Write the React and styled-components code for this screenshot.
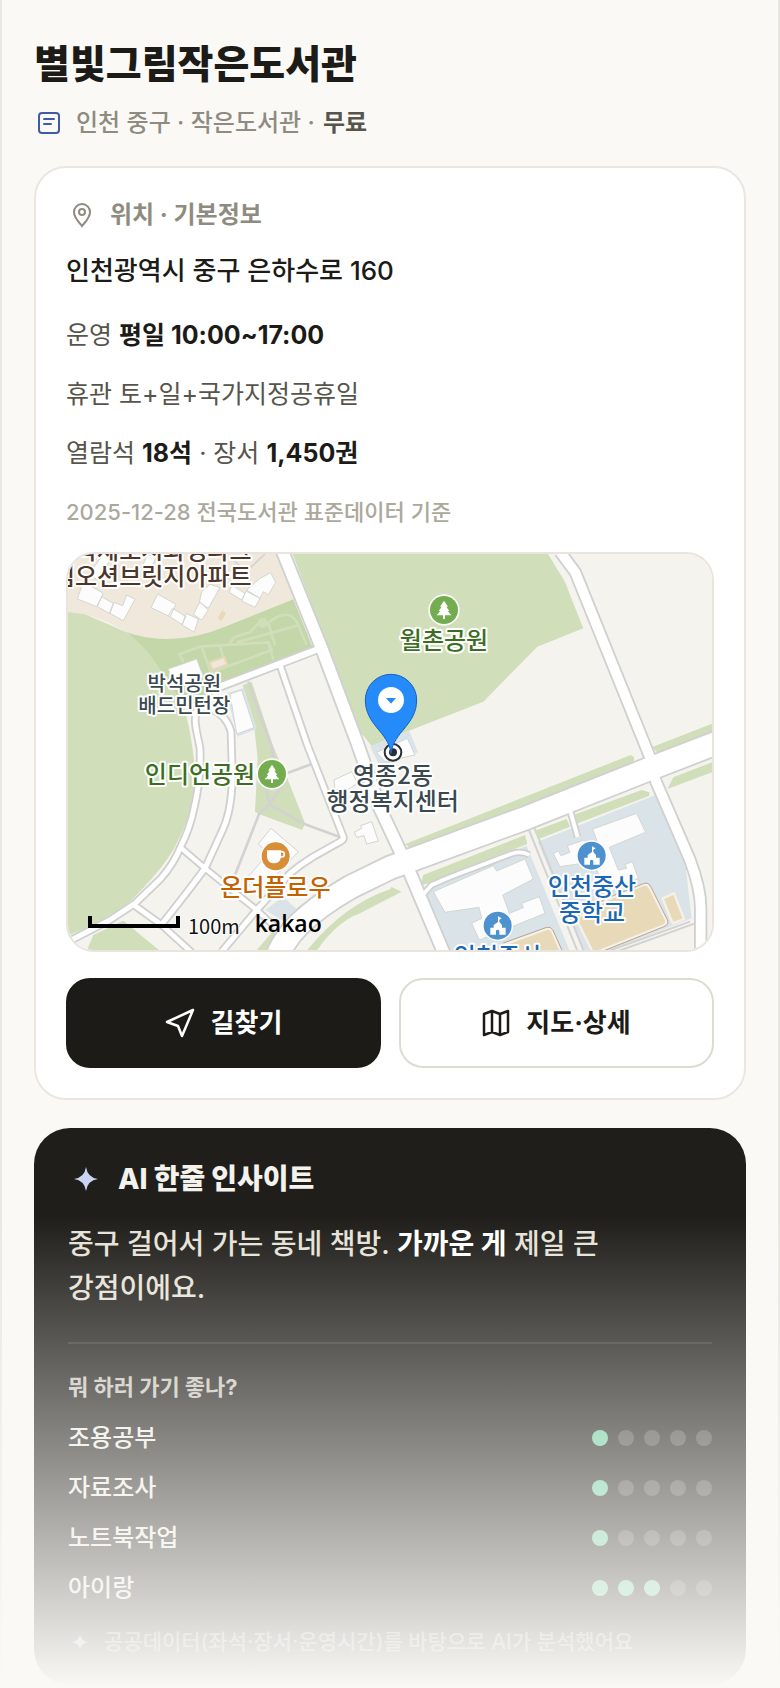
import React from 'react'
import styled, { createGlobalStyle } from 'styled-components'

const GlobalStyle = createGlobalStyle`
    *{
        box-sizing: border-box;
    }

    body{
        margin: 0;
        background: #faf9f6;
        color: #1c1b17;
        font-family: Inter, 'Noto Sans CJK KR', sans-serif;
        font-weight: 500;
        word-break: keep-all;
    }

    h1, h2, h3, p, ul{
        margin: 0;
        padding: 0;
        font-weight: inherit;
        list-style: none;
    }
`

const Page = styled.main`
    position: relative;
    min-height: 100vh;
    padding: 40px 32px 2px;
    border: solid #e9e8e1;
    border-width: 0 2px;
`

const Title = styled.h1`
    font-size: 39px;
    line-height: 48px;
    font-weight: 800;
`

const Meta = styled.div`
    display: flex;
    align-items: center;
    margin: 16px 0 24px;
    padding-left: 2px;
    font-size: 24px;
    line-height: 38px;
    color: #8f8b80;

    svg{
        margin-right: 14px;
    }

    strong{
        margin-left: 8px;
        font-weight: 600;
        color: #57544b;
    }
`

const Card = styled.section`
    padding: 28px 30px 30px;
    background: #fff;
    border: 2px solid #e9e7e0;
    border-radius: 32px;
`

const CardHeading = styled.h2`
    display: flex;
    align-items: center;
    gap: 16px;
    padding-left: 4px;
    font-size: 24px;
    line-height: 38px;
    font-weight: 700;
    color: #8f8b80;
`

const Address = styled.p`
    margin: 18px 0 26px;
    font-size: 26px;
    line-height: 38px;
`

const Info = styled.p`
    margin-bottom: 20px;
    font-size: 25px;
    line-height: 39px;
    font-weight: 400;
    color: #57544b;

    strong{
        font-weight: 700;
        color: #1c1b17;
    }
`

const Source = styled.p`
    margin-bottom: 21px;
    font-size: 22px;
    line-height: 38px;
    color: #aca89b;
`

const MapFrame = styled.div`
    height: 400px;
    overflow: hidden;
    border: 2px solid #e9e5de;
    border-radius: 28px;

    svg{
        display: block;
        width: 100%;
        height: 100%;
    }
`

const MapLabel = styled.text`
    font-family: 'Noto Sans CJK KR', sans-serif;
    font-size: ${({ $small }) => ($small ? 60 : 72)}px;
    font-weight: 500;
    fill: ${({ $color }) => $color};
    stroke: #fff;
    stroke-width: 12px;
    stroke-linejoin: round;
    paint-order: stroke;
`

const Actions = styled.div`
    display: grid;
    grid-template-columns: 1fr 1fr;
    gap: 18px;
    margin-top: 26px;
`

const ActionButton = styled.button`
    display: flex;
    align-items: center;
    justify-content: center;
    gap: 16px;
    height: 90px;
    padding: 0;
    border: 2px solid ${({ $dark }) => ($dark ? '#1c1b17' : '#dddbd2')};
    border-radius: 24px;
    background: ${({ $dark }) => ($dark ? '#1c1b17' : '#fff')};
    color: ${({ $dark }) => ($dark ? '#fff' : '#1c1b17')};
    font-family: inherit;
    font-size: 26px;
    line-height: 38px;
    font-weight: 700;
    cursor: pointer;
`

const InsightCard = styled.section`
    margin-top: 28px;
    padding: 31px 34px 24px;
    border-radius: 36px;
    background: #1f1e1a;
    color: #f4f2ec;
`

const InsightHeading = styled.h2`
    display: flex;
    align-items: center;
    gap: 20px;
    padding-left: 6px;
    font-size: 28px;
    line-height: 40px;
    font-weight: 800;
`

const Summary = styled.p`
    margin-top: 23px;
    padding-bottom: 32px;
    border-bottom: 2px solid #363530;
    font-size: 28px;
    line-height: 44px;
    color: #e6e2d8;

    strong{
        font-weight: 700;
        color: #fff;
    }
`

const Question = styled.h3`
    margin: 24px 0 7px;
    font-size: 22px;
    line-height: 38px;
    font-weight: 700;
    color: #c9c5ba;
`

const Score = styled.li`
    display: flex;
    align-items: center;
    justify-content: space-between;
    height: 50px;
    font-size: 24px;
    line-height: 38px;
    font-weight: 500;
    color: #f0eee6;
`

const Dots = styled.span`
    display: flex;
    gap: 10px;
`

const Dot = styled.i`
    width: 16px;
    height: 16px;
    border-radius: 50%;
    background: ${({ $on }) => ($on ? '#6fcf9f' : '#4a4945')};
`

const Note = styled.p`
    display: flex;
    align-items: center;
    gap: 16px;
    margin-top: 10px;
    padding-left: 4px;
    font-size: 21px;
    line-height: 38px;
    color: #8f8b80;
`

const Fade = styled.div`
    position: absolute;
    right: -2px;
    bottom: 0;
    left: -2px;
    height: 472px;
    pointer-events: none;
    background: linear-gradient(rgba(250, 249, 246, 0), #faf9f6);
`

const Sparkle = ({ size, color }) => (
    <svg width={size} height={size} viewBox="0 0 24 24" fill={color}>
        <path d="M12 0 Q13.5 10.5 24 12 Q13.5 13.5 12 24 Q10.5 13.5 0 12 Q10.5 10.5 12 0Z" />
    </svg>
)

const Road = ({ d, width }) => (
    <path d={d} strokeWidth={width} />
)

const roads = [
    ['M480 425 L655 358 L780 310', 18],
    ['M660 360 L742 600 L850 876 Q852 884 840 890 L760 935 Q720 960 690 985 L590 1095 L485 1220', 15],
    ['M420 480 Q400 500 408 550 L420 610 Q424 700 402 790 Q390 850 362 905 Q340 960 300 1003 L225 1075 L150 1125 L30 1187', 15],
    ['M450 490 Q500 510 513 560 L517 690 Q516 790 490 850 L435 970 L390 1030 L308 1135', 15],
    ['M362 908 L435 970 L590 1095 L650 1150', 13],
    ['M222 1080 L305 1140 L395 1222', 14],
    ['M668 20 L785 310 L892 595 L960 790 L1040 960 L1152 1225', 34],
    ['M1500 20 L1546 82 L1768 632 L1788 710 L1890 945 Q1922 1030 1922 1090 V1225', 29],
    ['M655 1225 Q680 1175 715 1140 Q770 1085 870 1027 L990 968 L1400 818 L1760 675 L1970 594', 67],
    ['M1530 795 L1553 876', 12],
    ['M1086 1052 L1115 1020 Q1170 995 1250 966 L1355 926 Q1385 917 1408 930', 11],
]

const Tree = ({ x, y }) => (
    <g transform={`translate(${x} ${y})`}>
        <circle r="47" fill="#fff" />
        <circle r="42" fill="#74ad4f" />
        <path d="M0 -28 L12 -10 H7 L16 3 H11 L22 16 H3 V27 H-3 V16 H-22 L-11 3 H-16 L-7 -10 H-12Z" fill="#fff" />
    </g>
)

const School = ({ x, y }) => (
    <g transform={`translate(${x} ${y})`}>
        <circle r="46" fill="#fff" />
        <circle r="42" fill="#4d91cf" />
        <path d="M1 -28 L12 -22 L5 -18 V-11 L13 -2 V6 H24 V27 H5 V15 Q0 10 -5 15 V27 H-22 V6 H-12 V-2 L1 -11Z" fill="#fff" />
    </g>
)

// drawn on a grid of three units to a pixel
const LocationMap = () => (
    <svg viewBox="24 27 1932 1188" preserveAspectRatio="xMidYMid slice" role="img" aria-label="지도">
        <rect x="-600" y="-600" width="3200" height="2600" fill="#f4f3ee" />

        <path d="M0 0 H645 L700 163 L500 243 Q340 310 200 262 Q140 225 75 208 L0 198Z" fill="#f0e8da" />
        <g fill="#d0deba">
            <path d="M0 198 L75 208 L200 262 Q260 300 300 372 L370 480 Q395 560 407 690 Q405 790 350 895 Q320 960 215 1065 Q120 1140 0 1180Z" />
            <path d="M695 20 H1460 L1495 78 Q1515 105 1530 150 L1570 250 L1432 305 L1270 470 L1045 558 L935 603 L900 560Z" />
            <path d="M548 420 L575 410 L640 605 L690 720 L735 835 L727 855 L598 808 L585 800 L593 640 L583 550Z" />
            <path d="M190 1127 L300 1218 H80 L100 1170Z" />
            <path d="M640 1157 L650 1175 L620 1220 H586Z" />
            <path d="M990 1033 Q850 1080 738 1220 H768 Q830 1130 900 1105 L1025 1040 L995 1026Z" />
            <path d="M1036 897 L1712 630 L1722 636 V650 L1705 658 L1055 914Z" />
            <path d="M1775 607 L1960 535 V566 L1795 625Z" />
            <path d="M1822 732 L1840 697 L1960 650 V680Z" />
        </g>
        <path d="M200 262 Q340 310 500 243 L700 163 L757 305 L655 345 L490 410 L430 480 L350 450 L285 350 Q250 300 200 262Z" fill="#c4d7a9" />
        <g fill="none" stroke="#d0deba" strokeWidth="8">
            <path d="M370 350 L358 328 L420 305 L625 292 L635 315 L500 365 L450 385 M425 305 L455 390 M480 302 L490 340 M505 298 L525 275 L570 262 L595 235 H625 L645 300 M620 238 Q680 185 710 230 L740 300 M530 292 L720 240 M625 292 L640 345" />
            <circle cx="608" cy="234" r="11" fill="#d0deba" />
        </g>
        <path d="M449 352 L493 337 L501 358 L457 374Z" fill="#efe7dc" stroke="#e8d8b8" strokeWidth="6" />
        <path d="M486 196 L498 204 L485 228 L473 220Z" fill="#e8dab8" />

        <g fill="#dae4e8">
            <path d="M1086 1055 L1120 1020 L1400 902 L1530 1220 H1150Z" />
            <path d="M1433 890 L1786 750 L1875 950 L1895 1120 L1640 1220 H1570Z" />
            <path d="M930 604 L1048 558 L1074 622 L960 665Z" />
            <path d="M616 1095 L670 1055 L716 1098 L665 1125Z" />
            <path d="M500 445 L552 428 L590 552 L532 575Z" />
        </g>

        <g fill="#fbfcfb" stroke="#d3d6d4" strokeWidth="3">
            <path d="M70 110 L130 145 L110 185 L52 162Z M125 155 L160 175 L148 205 L112 185Z M200 150 L225 163 L190 227 L150 205 L162 172 L188 182Z" />
            <path d="M293 147 L348 178 L330 215 L273 188Z M338 190 L378 215 L365 238 L325 212Z M378 205 L415 222 L403 262 L367 240Z M420 170 L445 195 L425 225 L400 208Z M450 118 L480 128 L445 190 L418 172 L425 140Z" />
            <path d="M515 120 L555 145 L545 165 L508 142Z M558 138 L600 160 L585 187 L545 168Z M600 100 L632 83 L647 112 L625 150 L610 140 L600 160 L560 135Z" />
            <path d="M85 90 L130 27 H160 L115 105Z M262 30 L290 35 L270 75 L245 68Z" />
            <path d="M325 372 L410 342 L430 395 L345 430Z M510 447 L545 435 L582 548 L530 567Z" />
            <path d="M633 850 L715 920 L598 1045 L565 995 L625 925 L595 897Z" />
            <path d="M883 862 L905 850 L902 842 L935 830 L955 888 L920 897 L912 872 L890 877Z M822 705 L875 680 L893 715 L845 745 L825 735Z" />
            <path d="M950 622 L1042 580 L1065 630 L975 650Z" />
            <path d="M1120 1040 L1300 962 L1310 978 L1395 942 L1420 1002 L1328 1050 L1348 1105 L1390 1088 L1385 1075 L1438 1055 L1455 1105 L1258 1185 L1235 1135 L1265 1120 L1257 1087 L1155 1102Z" />
            <path d="M1598 852 L1730 805 L1757 862 L1648 907 L1675 975 L1700 970 L1695 958 L1717 950 L1735 1000 L1640 1045 L1600 950 L1500 965 L1480 925 L1495 918 L1503 932 L1530 922 L1522 902 L1570 886 L1615 900Z" />
        </g>
        <path d="M518 40 Q540 75 575 65 L615 27" fill="none" stroke="#d3d3d3" strokeWidth="5" />

        <g fill="#e8dab8" stroke="#f6f1e8" strokeWidth="7" strokeLinejoin="round">
            <path d="M1548 1120 L1640 1065 L1750 1020 Q1763 1015 1770 1030 L1818 1125 Q1822 1138 1810 1142 L1600 1225Z" />
            <path d="M1330 1200 L1460 1152 Q1470 1148 1476 1158 L1505 1225 H1320Z" />
            <path d="M1808 1060 L1842 1045 L1872 1122 L1838 1135Z" />
        </g>
        <g fill="none" stroke="#b9a48c" strokeWidth="3">
            <path d="M1543 1120 L1640 1060 L1750 1016 Q1765 1010 1773 1026 L1822 1124 Q1828 1138 1812 1145 L1600 1230" />
            <path d="M1330 1194 L1460 1147 Q1472 1143 1479 1156 L1510 1225" />
        </g>

        <g fill="none" stroke="#d2d2d2" strokeWidth="8">
            <path d="M565 410 L600 510 L635 605 L640 640 L612 700 L628 778 L598 805 L525 990 M680 685 L762 655 M682 700 L628 778 L735 838 L850 880" />
            <path d="M1403 845 L1555 1225 M1422 845 L1574 1225" strokeWidth="6" />
            <path d="M1670 1220 L1905 1135 M1640 1220 L1890 1130" strokeWidth="6" />
        </g>
        <g fill="#d0deba">
            <path d="M1080 1022 L1090 990 L1395 870 L1402 897 L1180 982 L1105 1015Z" />
            <path d="M1423 858 L1520 822 L1530 845 L1435 883Z" />
            <path d="M1540 810 L1745 735 L1768 742 V752 L1550 836Z" />
        </g>

        <g fill="none" stroke="#d0d0d0" strokeLinejoin="round">
            {roads.map(([d, width]) => <Road key={d} d={d} width={width + 11} />)}
        </g>
        <g fill="none" stroke="#fff" strokeLinejoin="round">
            {roads.map(([d, width]) => <Road key={d} d={d} width={width} />)}
        </g>

        <MapLabel x="575" y="41" textAnchor="end" $color="#4d3529">국제도시화성파크</MapLabel>
        <MapLabel x="575" y="119" textAnchor="end" $color="#4d3529">림오션브릿지아파트</MapLabel>
        <MapLabel x="373" y="437" textAnchor="middle" $small $color="#3a4850">박석공원</MapLabel>
        <MapLabel x="373" y="504" textAnchor="middle" $small $color="#3a4850">배드민턴장</MapLabel>
        <MapLabel x="1152" y="313" textAnchor="middle" $color="#3c6e22">월촌공원</MapLabel>
        <MapLabel x="420" y="714" textAnchor="middle" $color="#3c6e22">인디언공원</MapLabel>
        <MapLabel x="999" y="716" textAnchor="middle" $color="#3a4850">영종2동</MapLabel>
        <MapLabel x="998" y="796" textAnchor="middle" $color="#3a4850">행정복지센터</MapLabel>
        <MapLabel x="646" y="1052" textAnchor="middle" $color="#c56200">온더플로우</MapLabel>
        <MapLabel x="1596" y="1050" textAnchor="middle" $color="#1b67b3">인천중산</MapLabel>
        <MapLabel x="1596" y="1129" textAnchor="middle" $color="#1b67b3">중학교</MapLabel>
        <MapLabel x="1314" y="1260" textAnchor="middle" $color="#1b67b3">인천중산</MapLabel>

        <Tree x={1152} y={195} />
        <Tree x={636} y={687} />
        <School x={1595} y={932} />
        <School x={1313} y={1142} />
        <circle cx="647" cy="934" r="46" fill="#fff" />
        <circle cx="647" cy="934" r="42" fill="#d88e37" />
        <path d="M621 916 H663 V936 Q660 955 642 955 Q624 955 621 936Z" fill="#fff" />
        <circle cx="665" cy="928" r="8" fill="none" stroke="#fff" strokeWidth="5" />

        <circle cx="999" cy="622" r="25" fill="#fff" stroke="#263035" strokeWidth="6" />
        <circle cx="999" cy="622" r="12" fill="#263035" />
        <path d="M993 625 C985 560 916 540 916 465 A77 77 0 0 1 1070 465 C1070 540 1001 560 993 625Z" fill="#258bfa" stroke="#1661c4" strokeWidth="3" />
        <circle cx="993" cy="465" r="39" fill="#fff" />
        <path d="M978 459 H1008 L993 476Z" fill="#258bfa" />

        <path d="M90 1113 V1143 H354 V1113" fill="none" stroke="#000" strokeWidth="12" />
        <text x="384" y="1167" fontFamily="'Noto Sans CJK KR', sans-serif" fontSize="60" fontWeight="400" fill="#111" stroke="#fff" strokeWidth="6" paintOrder="stroke">100m</text>
        <text x="584" y="1160" fontFamily="'Open Sans', sans-serif" fontSize="69" fontWeight="600" fill="#000">kakao</text>
    </svg>
)

const scores = [
    { name: '조용공부', value: 1 },
    { name: '자료조사', value: 1 },
    { name: '노트북작업', value: 1 },
    { name: '아이랑', value: 3 },
]

const App = () => {

    return (
        <>
            <GlobalStyle />
            <Page>
                <Title>별빛그림작은도서관</Title>
                <Meta>
                    <svg width="26" height="26" viewBox="0 0 26 26" fill="none" stroke="#3f5aa9" strokeWidth="2" strokeLinecap="round">
                        <rect x="3" y="3" width="20" height="20" rx="3" />
                        <path d="M8 9 H18 M8 14 H15" />
                    </svg>
                    인천 중구 · 작은도서관 ·
                    <strong>무료</strong>
                </Meta>

                <Card>
                    <CardHeading>
                        <svg width="24" height="28" viewBox="0 0 24 28" fill="none" stroke="#8f8b80" strokeWidth="2">
                            <path d="M12 25 C9 21 4 17 4 11 A8 8 0 0 1 20 11 C20 17 15 21 12 25Z" />
                            <circle cx="12" cy="11" r="3" />
                        </svg>
                        위치 · 기본정보
                    </CardHeading>
                    <Address>인천광역시 중구 은하수로 160</Address>
                    <Info>운영 <strong>평일 10:00~17:00</strong></Info>
                    <Info>휴관 토+일+국가지정공휴일</Info>
                    <Info>열람석 <strong>18석</strong> · 장서 <strong>1,450권</strong></Info>
                    <Source>2025-12-28 전국도서관 표준데이터 기준</Source>
                    <MapFrame>
                        <LocationMap />
                    </MapFrame>
                    <Actions>
                        <ActionButton type="button" $dark>
                            <svg width="30" height="30" viewBox="0 0 30 30" fill="none" stroke="currentColor" strokeWidth="2.5" strokeLinejoin="round">
                                <path d="M28 2 L2 14 L13 18 L17 28Z" />
                            </svg>
                            길찾기
                        </ActionButton>
                        <ActionButton type="button">
                            <svg width="28" height="28" viewBox="0 0 28 28" fill="none" stroke="currentColor" strokeWidth="2.5" strokeLinejoin="round">
                                <path d="M2 5 L10 2 L18 5 L26 2 V23 L18 26 L10 23 L2 26Z M10 2 V23 M18 5 V26" />
                            </svg>
                            지도·상세
                        </ActionButton>
                    </Actions>
                </Card>

                <InsightCard>
                    <InsightHeading>
                        <Sparkle size={24} color="#c9d4f5" />
                        AI 한줄 인사이트
                    </InsightHeading>
                    <Summary>
                        중구 걸어서 가는 동네 책방. <strong>가까운 게</strong> 제일 큰 강점이에요.
                    </Summary>
                    <Question>뭐 하러 가기 좋나?</Question>
                    <ul>
                        {scores.map(({ name, value }) => (
                            <Score key={name}>
                                {name}
                                <Dots role="img" aria-label={`5점 중 ${value}점`}>
                                    {[1, 2, 3, 4, 5].map((n) => <Dot key={n} $on={n <= value} />)}
                                </Dots>
                            </Score>
                        ))}
                    </ul>
                    <Note>
                        <Sparkle size={16} color="#a9aeb8" />
                        공공데이터(좌석·장서·운영시간)를 바탕으로 AI가 분석했어요
                    </Note>
                </InsightCard>
                <Fade />
            </Page>
        </>
    )
}

export default App
